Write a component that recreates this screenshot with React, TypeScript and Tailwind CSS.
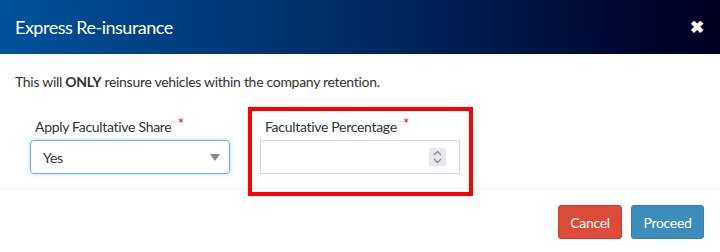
import React from "react";

export default function App() {
  return (
    <div className="relative w-[720px] h-[252px] bg-white overflow-hidden tracking-[-0.3px]" style={{ fontFamily: "Lato, 'Noto Sans', sans-serif" }}>
      <div className="h-[54px] flex items-center justify-between px-[15px] bg-gradient-to-r from-[#00529b] via-[#002a64] to-[#000020]">
        <div className="text-white text-[18px] leading-none pb-[1px] tracking-[-0.5px]">Express Re-insurance</div>
        <div className="text-white text-[17px] font-bold leading-none mr-[1px] pb-[2px]">✖</div>
      </div>
      <div className="px-[15px] pt-[18px]">
        <p className="text-[14px] text-[#333] leading-[20px]">
          This will <b>ONLY</b> reinsure vehicles within the company retention.
        </p>
        <div className="flex mt-[24px] pb-[14px]">
          <div className="w-[230px] px-[15px]">
            <label className="block text-[14px] text-[#333] leading-[20px] pl-[5px] mb-[3px]">
              Apply Facultative Share <span className="text-[#dd0000] ml-[3px] relative top-[-3px] text-[15px]">*</span>
            </label>
            <div className="h-[34px] w-[200px] border border-[#66afe9] rounded-[4px] shadow-[0_0_4px_rgba(102,175,233,0.5)] flex items-center justify-between px-[12px]">
              <span className="text-[14px] text-[#333]">Yes</span>
              <span className="w-0 h-0 border-l-[5px] border-r-[5px] border-t-[7px] border-l-transparent border-r-transparent border-t-[#888] mr-[-3px]"></span>
            </div>
          </div>
          <div className="w-[230px] px-[15px]">
            <label className="block text-[14px] text-[#333] leading-[20px] pl-[5px] mb-[3px]">
              Facultative Percentage <span className="text-[#dd0000] ml-[3px] relative top-[-3px] text-[15px]">*</span>
            </label>
            <div className="h-[34px] w-[200px] border border-[#d2d6de] flex items-center justify-end pr-[13px]">
              <div className="w-[17px] h-[18px] bg-[#e8e8ec] flex flex-col items-center justify-center">
                <svg width="9" height="14" viewBox="0 0 9 14" fill="none" stroke="#8a8a96" strokeWidth="1.3">
                  <path d="M1 5 L4.5 1.5 L8 5" />
                  <path d="M1 9 L4.5 12.5 L8 9" />
                </svg>
              </div>
            </div>
          </div>
        </div>
      </div>
      <div className="border-t border-[#f0f0f0] px-[16px] pt-[16px] flex justify-end gap-[9px]">
        <button className="h-[34px] w-[64px] bg-[#dd4b39] border border-[#d73925] rounded-[3px] text-white text-[14px]">Cancel</button>
        <button className="h-[34px] w-[73px] bg-[#3c8dbc] border border-[#367fa9] rounded-[3px] text-white text-[14px]">Proceed</button>
      </div>
      <div className="absolute left-[248px] top-[107px] w-[225px] h-[89px] border-[4px] border-[#ff0000]"></div>
    </div>
  );
}
